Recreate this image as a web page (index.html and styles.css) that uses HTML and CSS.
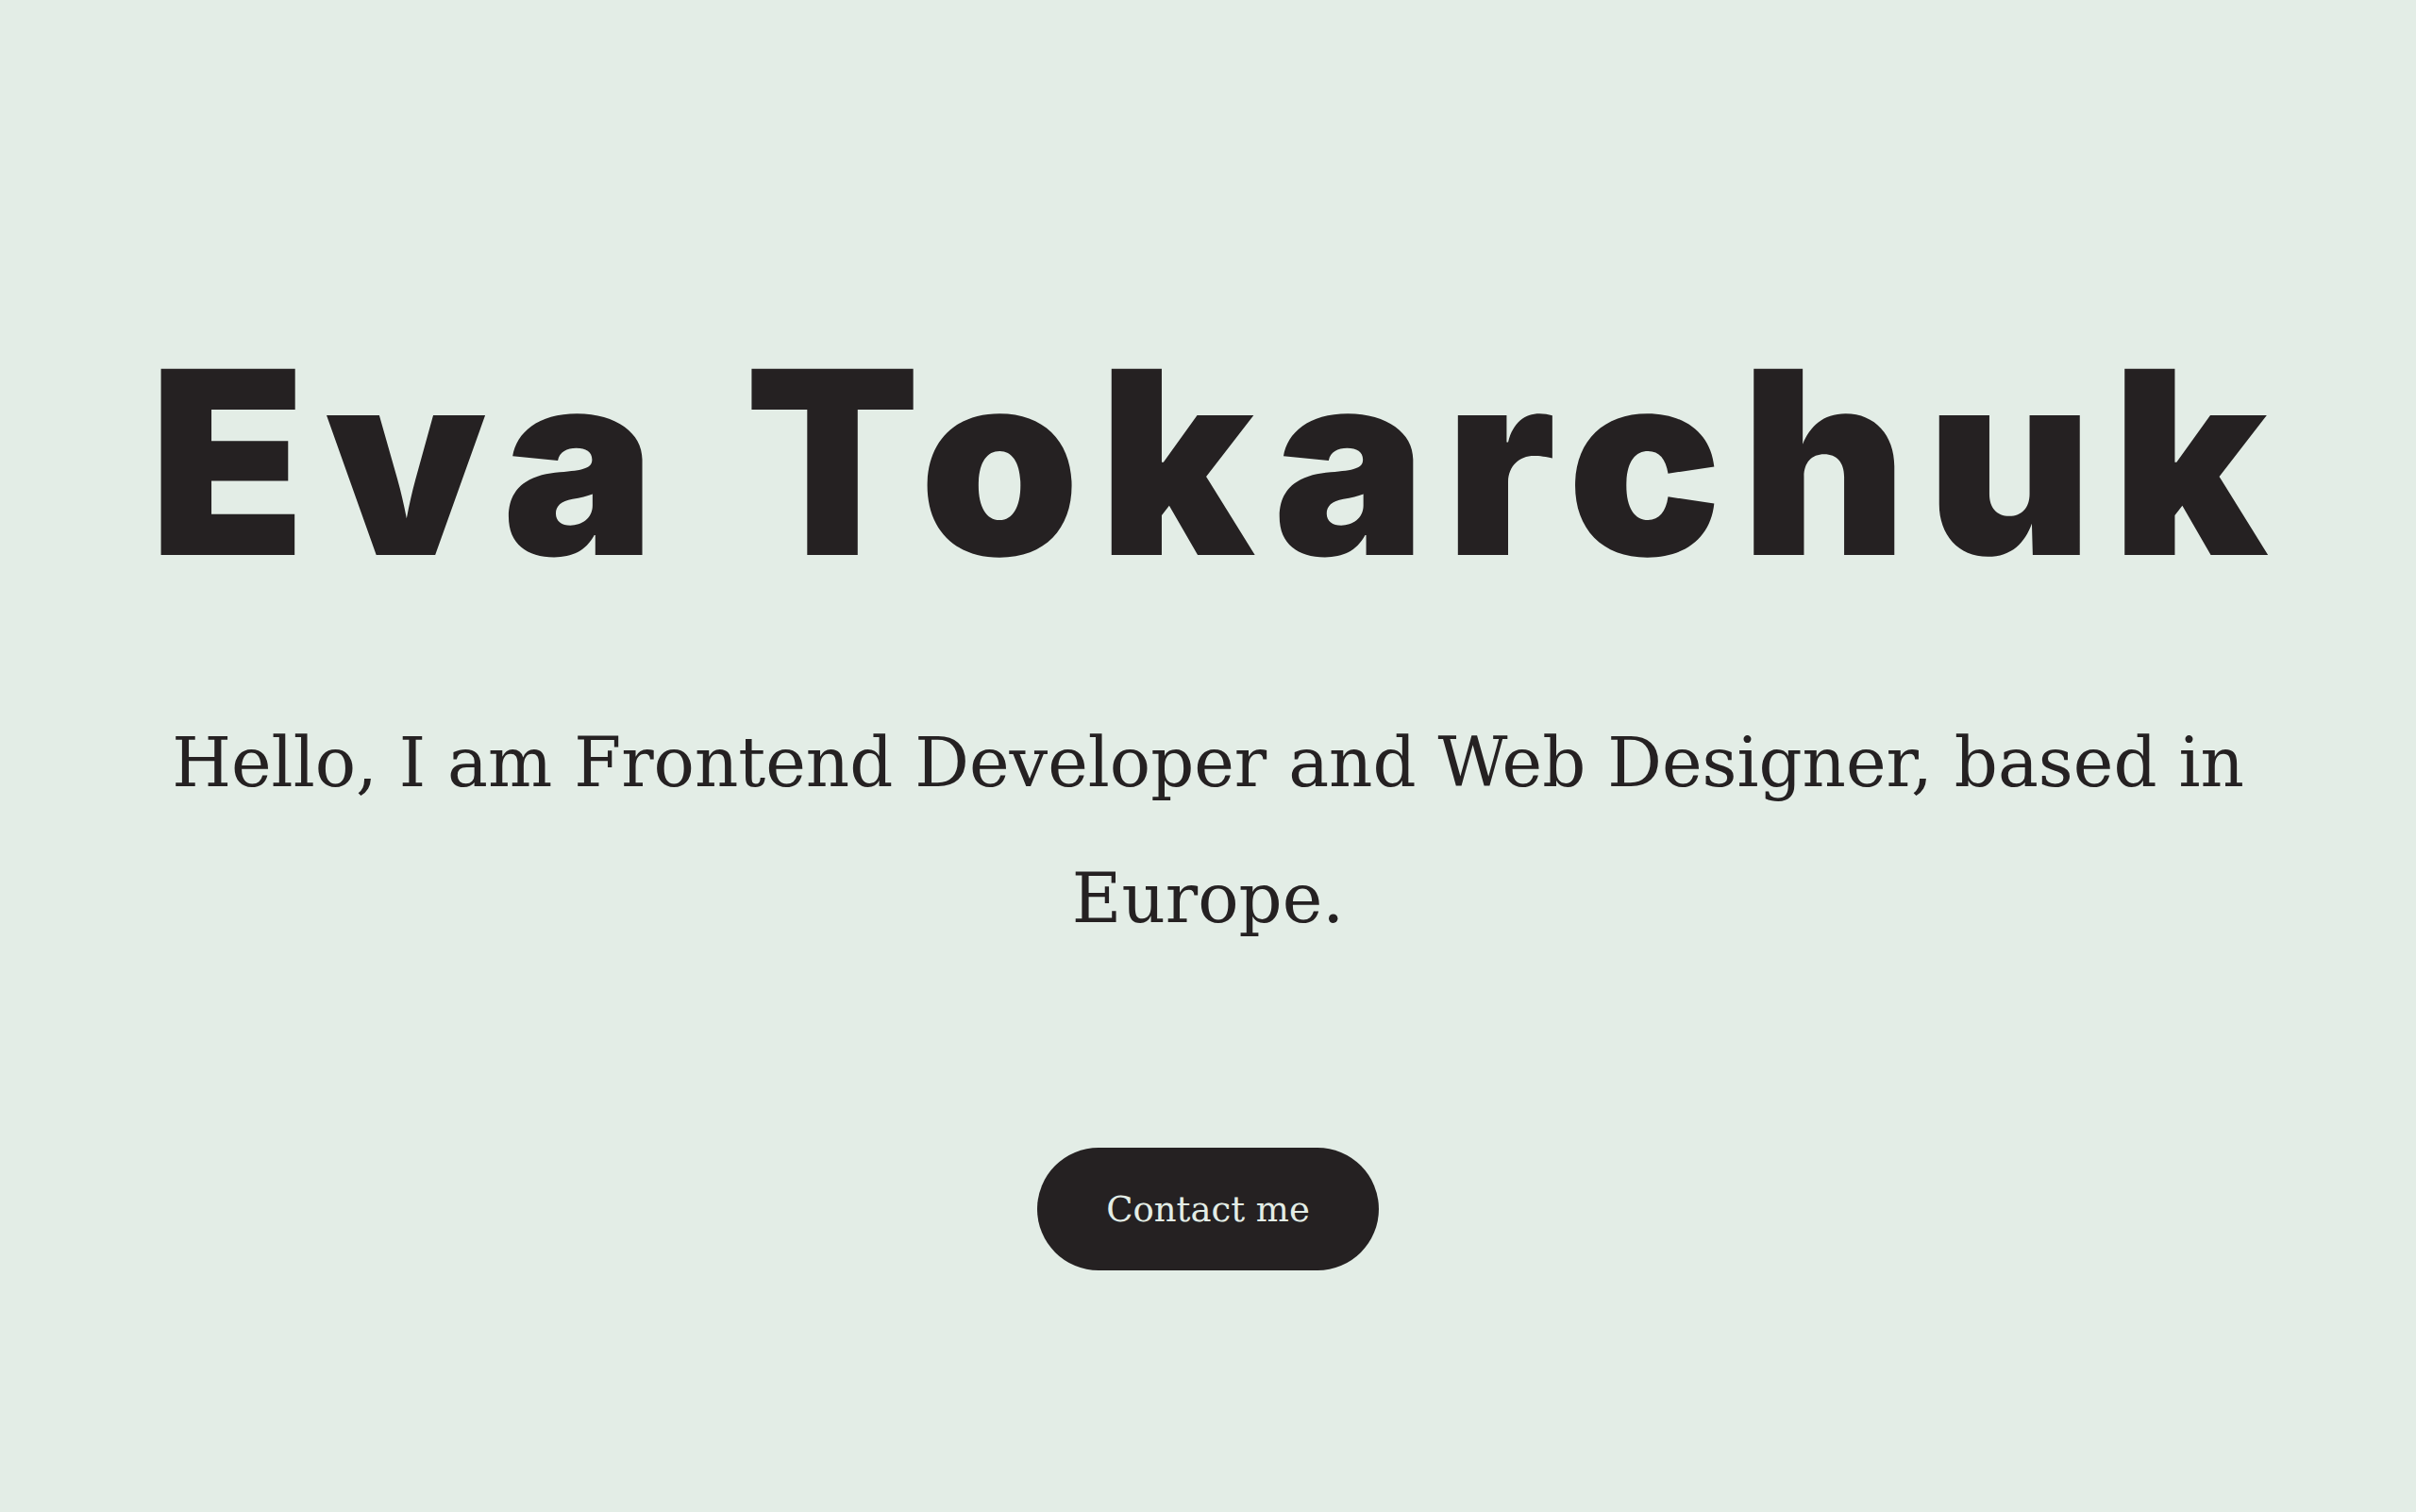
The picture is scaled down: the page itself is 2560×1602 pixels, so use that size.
FILE: index.html
```html
<!DOCTYPE html>
<html lang="en">
<head>
<meta charset="utf-8">
<title>Eva Tokarchuk</title>
<link rel="stylesheet" href="styles.css">
</head>
<body>
<main class="hero">
  <h1 class="hero-title">Eva Tokarchuk</h1>
  <p class="hero-text">Hello, I am Frontend Developer and Web Designer, based in Europe.</p>
  <a class="hero-button" href="#contact">Contact me</a>
</main>
</body>
</html>
```

FILE: styles.css
```css
html, body {
  margin: 0;
  padding: 0;
}

body {
  background: #e3ede6;
  color: #252122;
  min-height: 1602px;
}

.hero {
  display: flex;
  flex-direction: column;
  align-items: center;
  padding-top: 354px;
}

.hero-title {
  margin: 0 -20.5px 0 0;
  font-family: Inter, "Liberation Sans", sans-serif;
  font-weight: 900;
  font-size: 271px;
  line-height: 1;
  letter-spacing: 20.5px;
  white-space: nowrap;
}

.hero-text {
  margin: 111px 0 0;
  width: 2260px;
  text-align: center;
  font-family: "DejaVu Serif", "Liberation Serif", serif;
  font-size: 72px;
  line-height: 144px;
}

.hero-button {
  margin-top: 192px;
  display: flex;
  align-items: center;
  justify-content: center;
  width: 362px;
  height: 130px;
  box-sizing: border-box;
  border-radius: 65px;
  background: #252122;
  color: #e3ede6;
  text-decoration: none;
  font-family: "DejaVu Serif", "Liberation Serif", serif;
  font-size: 37px;
}
```
